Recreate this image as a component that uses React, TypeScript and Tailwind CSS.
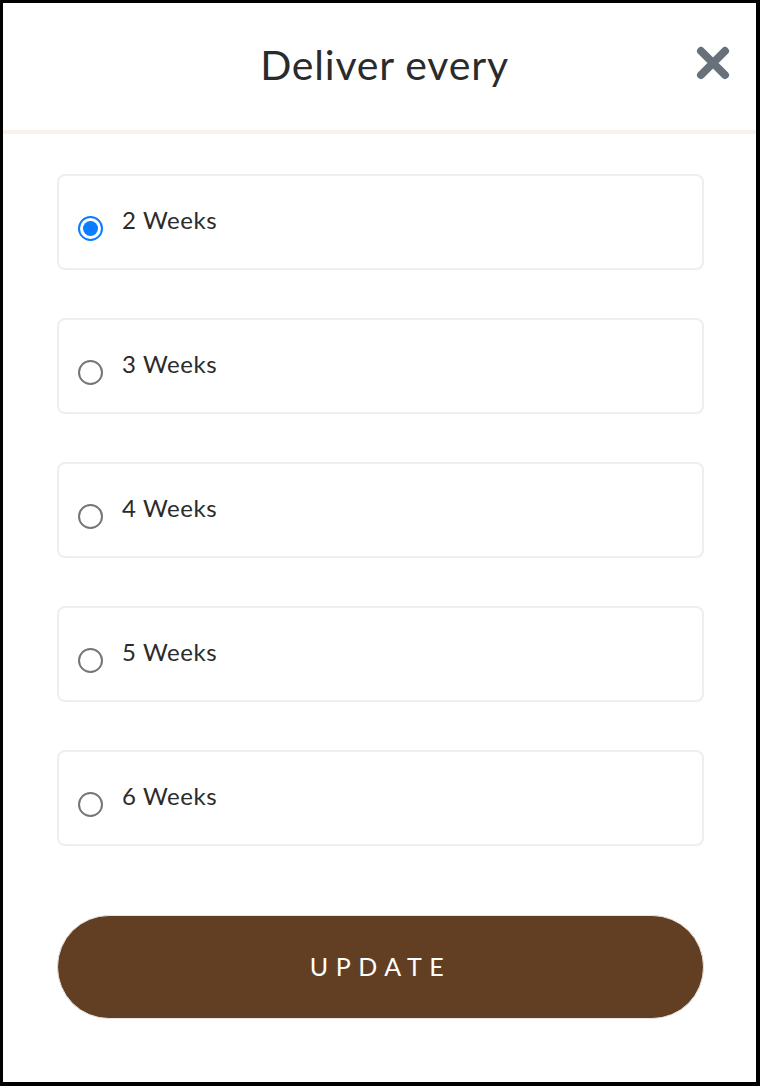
import React, { useState } from 'react';

const options = ['2 Weeks', '3 Weeks', '4 Weeks', '5 Weeks', '6 Weeks'];

export default function App() {
  const [selected, setSelected] = useState('2 Weeks');

  return (
    <div
      className="w-[760px] h-[1086px] bg-white border-black border-t-[3px] border-l-[3px] border-r-[4px] border-b-[4px] flex flex-col text-[#2b2b2b]"
      style={{ fontFamily: 'Lato, "Open Sans", sans-serif' }}
    >
      <div className="relative h-[127px] flex items-center justify-center shrink-0">
        <h2 className="text-[41px] font-normal tracking-[0.8px] pl-[10px] pb-[4px]">Deliver every</h2>
        <button className="absolute right-[26px] top-[43px] w-[34px] h-[34px] flex items-center justify-center">
          <svg width="34" height="34" viewBox="0 0 34 34">
            <path d="M5 5 L29 29 M29 5 L5 29" stroke="#68717a" strokeWidth="8" strokeLinecap="round" />
          </svg>
        </button>
      </div>
      <div className="h-[4px] bg-[#fbf1e9] shrink-0" />

      <div className="pl-[54px] pr-[52px] pt-[40px] flex flex-col">
        <div className="flex flex-col gap-[48px]">
          {options.map(opt => {
            const active = selected === opt;
            return (
              <label
                key={opt}
                onClick={() => setSelected(opt)}
                className="h-[96px] border-2 border-[#eeeeee] rounded-[8px] flex items-center pl-[19px] cursor-pointer"
              >
                <span
                  className={`mt-[12px] w-[25px] h-[25px] rounded-full border-2 flex items-center justify-center shrink-0 ${active ? 'border-[#0a7cff]' : 'border-[#767676]'}`}
                >
                  {active && <span className="w-[15px] h-[15px] rounded-full bg-[#0a7cff]" />}
                </span>
                <span className="ml-[19px] text-[24px] tracking-[0.6px] text-[#2b2b2b] pb-[4px]">{opt}</span>
              </label>
            );
          })}
        </div>

        <button className="mt-[69px] h-[104px] w-full rounded-full bg-[#623f23] border border-[#e8e4e0] text-white text-[25px] tracking-[0.3em] flex items-center justify-center">
          UPDATE
        </button>
      </div>
    </div>
  );
}
